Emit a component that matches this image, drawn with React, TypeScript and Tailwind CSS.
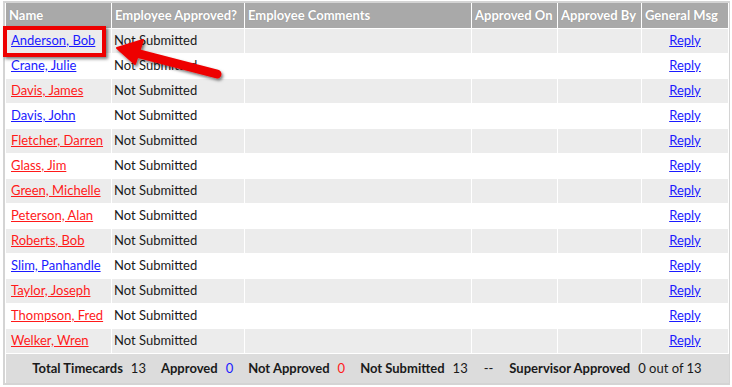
import React from 'react';

type Row = {
  name: string;
  tone: 'blue' | 'red';
};

const rows: Row[] = [
  { name: 'Anderson, Bob', tone: 'blue' },
  { name: 'Crane, Julie', tone: 'blue' },
  { name: 'Davis, James', tone: 'red' },
  { name: 'Davis, John', tone: 'blue' },
  { name: 'Fletcher, Darren', tone: 'red' },
  { name: 'Glass, Jim', tone: 'red' },
  { name: 'Green, Michelle', tone: 'red' },
  { name: 'Peterson, Alan', tone: 'red' },
  { name: 'Roberts, Bob', tone: 'red' },
  { name: 'Slim, Panhandle', tone: 'blue' },
  { name: 'Taylor, Joseph', tone: 'red' },
  { name: 'Thompson, Fred', tone: 'red' },
  { name: 'Welker, Wren', tone: 'red' },
];

const headers = [
  'Name',
  'Employee Approved?',
  'Employee Comments',
  'Approved On',
  'Approved By',
  'General Msg',
];

const PointerArrow = () => (
  <svg
    className="absolute left-[100px] top-[36px] pointer-events-none"
    width="130"
    height="50"
    viewBox="0 0 130 50"
  >
    <defs>
      <filter id="drop" x="-20%" y="-40%" width="140%" height="180%">
        <feDropShadow dx="1.5" dy="2" stdDeviation="1.5" floodColor="#000" floodOpacity="0.55" />
      </filter>
    </defs>
    <g filter="url(#drop)">
      <path d="M117 37 L36 16" stroke="#ee0000" strokeWidth="9" strokeLinecap="round" fill="none" />
      <path d="M17 11 L43 3 L35 27 Z" fill="#ee0000" stroke="#ee0000" strokeWidth="2" strokeLinejoin="round" />
    </g>
  </svg>
);

export default function App() {
  return (
    <div className="relative w-[732px] h-[387px] bg-white font-['Lato','Open_Sans',sans-serif] text-[13px] text-[#1a1a1a]">
      <div className="ml-[3px] mt-[1px] w-[727px] border-2 border-[#d4d4d4]">
        <table className="w-[723px] border-collapse table-fixed">
          <colgroup>
            <col className="w-[106px]" />
            <col className="w-[133px]" />
            <col className="w-[227px]" />
            <col className="w-[86px]" />
            <col className="w-[84px]" />
            <col className="w-[87px]" />
          </colgroup>
          <thead>
            <tr className="h-[25px] bg-[#a9a9a9]">
              {headers.map((h) => (
                <th
                  key={h}
                  className="border border-white border-t-0 px-[3px] text-left font-bold text-white whitespace-nowrap [text-shadow:0_0_1px_#8a8a8a]"
                >
                  {h}
                </th>
              ))}
            </tr>
          </thead>
          <tbody>
            {rows.map((r, i) => (
              <tr key={r.name} className={`h-[25px] ${i % 2 === 0 ? 'bg-[#ececec]' : 'bg-white'}`}>
                <td className="border border-white px-[5px] whitespace-nowrap">
                  <a
                    href="#"
                    className={`underline ${r.tone === 'blue' ? 'text-[#1a1aff]' : 'text-[#ff1a1a]'}`}
                  >
                    {r.name}
                  </a>
                </td>
                <td className="border border-white px-[2px] whitespace-nowrap">Not Submitted</td>
                <td className="border border-white" />
                <td className="border border-white" />
                <td className="border border-white" />
                <td className="border border-white text-center">
                  <a href="#" className="underline text-[#1a1aff]">Reply</a>
                </td>
              </tr>
            ))}
          </tbody>
          <tfoot>
            <tr className="h-[30px] bg-[#dcdcdc]">
              <td colSpan={6} className="text-center whitespace-nowrap">
                <span className="font-bold">Total Timecards</span>
                <span className="ml-[8px]">13</span>
                <span className="ml-[15px] font-bold">Approved</span>
                <span className="ml-[8px] text-[#1a1aff]">0</span>
                <span className="ml-[15px] font-bold">Not Approved</span>
                <span className="ml-[8px] text-[#ff1a1a]">0</span>
                <span className="ml-[15px] font-bold">Not Submitted</span>
                <span className="ml-[8px]">13</span>
                <span className="ml-[16px]">--</span>
                <span className="ml-[16px] font-bold">Supervisor Approved</span>
                <span className="ml-[8px]">0 out of 13</span>
              </td>
            </tr>
          </tfoot>
        </table>
      </div>

      {/* callout around the first employee */}
      <div className="absolute left-[3px] top-[25px] w-[103px] h-[31px] border-[4px] border-[#ee0000] shadow-[2px_2px_3px_rgba(0,0,0,0.5)] pointer-events-none" />
      <PointerArrow />
    </div>
  );
}
